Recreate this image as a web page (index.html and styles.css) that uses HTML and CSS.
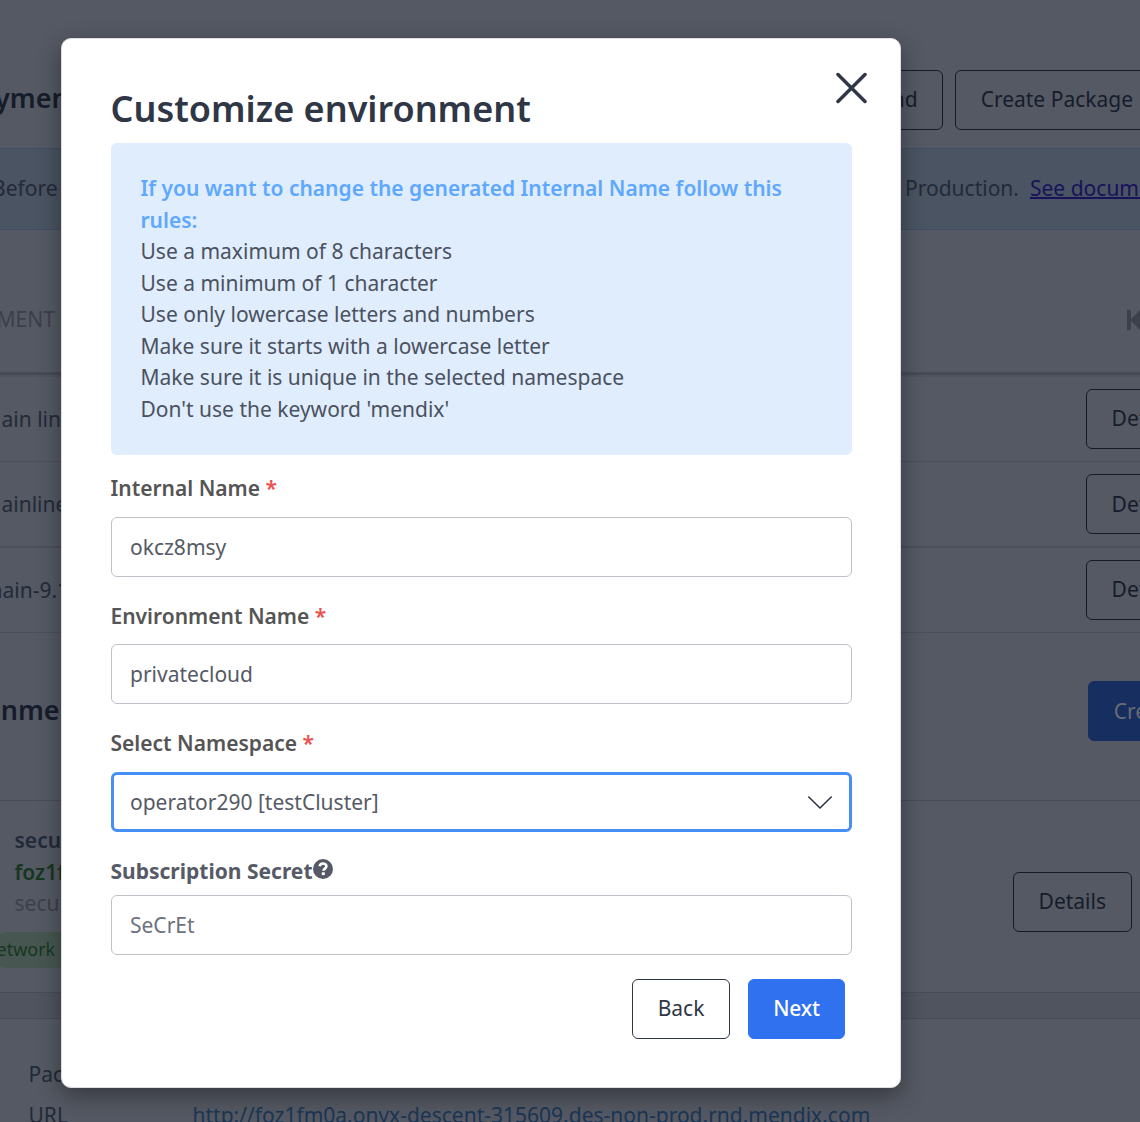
FILE: index.html
```html
<!DOCTYPE html>
<html lang="en">
<head>
<meta charset="utf-8">
<title>Customize environment</title>
<link rel="stylesheet" href="styles.css">
</head>
<body>
<main class="page">
  <header class="page-head">
    <h2 class="page-title">yment</h2>
    <div class="btn btn-dim btn-upload">nd</div>
    <div class="btn btn-dim">Create Package</div>
  </header>
  <div class="banner">
    <span class="banner-start">Before</span>
    <span class="banner-end">Production.</span>
    <a class="banner-link">See documentation</a>
  </div>
  <div class="table-head">
    <span class="column-name">MENT</span>
    <svg class="pager" width="20" height="20" viewBox="0 0 20 20"><path d="M0 0h4v20H0zM3 10 13 0v20z"/></svg>
  </div>
  <div class="row"><span class="row-name">ain line</span><div class="btn btn-dim">Details</div></div>
  <div class="row row-second"><span class="row-name">ainline</span><div class="btn btn-dim">Details</div></div>
  <div class="row"><span class="row-name row-name-cut">nain-9.1</span><div class="btn btn-dim">Details</div></div>
  <div class="env-head">
    <h2 class="env-title">onme</h2>
    <div class="btn btn-dim-primary">Create</div>
  </div>
  <section class="env-card">
    <div class="env-info">
      <div class="env-name">secu</div>
      <div class="env-id">foz1f</div>
      <div class="env-sub">secu</div>
      <div class="badge">etwork</div>
    </div>
    <div class="btn btn-dim env-details">Details</div>
  </section>
  <section class="env-meta">
    <div class="meta-row"><span class="meta-key">Pac</span></div>
    <div class="meta-row"><span class="meta-key">URL</span><a class="meta-link">http://foz1fm0a.onyx-descent-315609.des-non-prod.rnd.mendix.com</a></div>
  </section>
</main>

<div class="modal">
  <svg class="close" width="32" height="32" viewBox="0 0 32 32"><path d="M2 2.500l27 27M29 2.500l-27 27"/></svg>
  <h1 class="modal-title">Customize environment</h1>
  <div class="info">
    <strong class="info-title">If you want to change the generated Internal Name follow this rules:</strong>
    <div>Use a maximum of 8 characters</div>
    <div>Use a minimum of 1 character</div>
    <div>Use only lowercase letters and numbers</div>
    <div>Make sure it starts with a lowercase letter</div>
    <div>Make sure it is unique in the selected namespace</div>
    <div>Don't use the keyword 'mendix'</div>
  </div>
  <div class="field">
    <div class="label">Internal Name <span class="required">*</span></div>
    <div class="input">okcz8msy</div>
  </div>
  <div class="field field-environment">
    <div class="label">Environment Name <span class="required">*</span></div>
    <div class="input">privatecloud</div>
  </div>
  <div class="field">
    <div class="label">Select Namespace <span class="required">*</span></div>
    <div class="input input-focus">operator290 [testCluster]
      <svg class="chevron" width="26" height="14" viewBox="0 0 26 14"><path d="M1.800 1 13 12 24.200 1"/></svg>
    </div>
  </div>
  <div class="field field-secret">
    <div class="label label-secret">Subscription Secret<svg class="help" width="20" height="20" viewBox="0 0 20 20"><circle cx="10" cy="10" r="10"/><path d="M6.600 7.300C7 5.200 8.300 4.500 10 4.500c2 0 3.400 1.100 3.400 2.800 0 2.300-2.900 2.300-2.900 4.500"/><rect x="8.800" y="13.300" width="3" height="2.800"/></svg></div>
    <div class="input input-placeholder">SeCrEt</div>
  </div>
  <div class="actions">
    <div class="btn btn-back">Back</div>
    <div class="btn btn-next">Next</div>
  </div>
</div>
</body>
</html>
```
FILE: styles.css
```css
* { box-sizing: border-box; }

body {
  margin: 0;
  width: 1140px;
  height: 1122px;
  overflow: hidden;
  background: #555963;
  font: 21px/31.5px "Noto Sans", sans-serif;
  color: #232a39;
}

h1, h2 { margin: 0; font-weight: 600; }

.page { width: 1205px; height: 1122px; overflow: hidden; background: #50545e; }
.page-head, .env-card, .table-head, .row, .env-head, .env-meta { background: #555963; }

.btn {
  display: flex;
  flex: none;
  align-items: center;
  justify-content: center;
  height: 60px;
  padding: 0 25px;
  border: 1px solid #2f3646;
  border-radius: 6px;
  white-space: nowrap;
}
.btn-dim { border-color: #151b2b; color: #151c2b; }
.btn-dim-primary { width: 116px; padding-top: 1px; background: #162e60; border-color: #162e60; color: #686b72; }

.page-head { display: flex; gap: 12px; height: 148px; padding: 70px 46px 0 0; }
.page-title { flex: 1; height: 60px; margin-left: -5px; font-size: 27px; line-height: 56px; color: #151c2b; }
.btn-upload { width: 90px; padding-right: 24px; justify-content: flex-end; }

.banner {
  display: flex;
  align-items: center;
  height: 82px;
  background: #4a5462;
  border: solid #3f4e64;
  border-width: 1px 0;
}
.banner-start { flex: none; width: 913px; margin-left: -8px; }
.banner-end { flex: none; width: 125px; }
.banner-link { color: #17125a; text-decoration: underline; text-decoration-thickness: 2px; white-space: nowrap; }

.table-head {
  display: flex;
  align-items: center;
  height: 145px;
  padding-top: 37px;
  border-bottom: 3px solid #474b56;
}
.column-name { width: 1130px; margin-left: -3.5px; color: #3c404b; }
.pager { fill: #3c404b; }

.row {
  display: flex;
  align-items: center;
  justify-content: space-between;
  height: 85px;
  border-bottom: 1px solid #4c505a;
}
.table-head + .row { height: 87px; border-top: 2px solid #4f535d; }
.row-second { height: 86px; border-bottom-width: 2px; }
.row-second .btn { padding-top: 1px; }
.row-name { padding: 2px 0 0 1.5px; }
.row-name-cut { margin-left: -12px; }

.env-head {
  display: flex;
  align-items: center;
  justify-content: space-between;
  height: 168px;
  padding-right: 1px;
  padding-bottom: 11px;
  border-bottom: 1px solid #484c57;
}
.env-title { margin: -3px 0 0 -16px; font-size: 27px; color: #151c2b; }

.env-card { display: flex; justify-content: space-between; height: 192px; padding: 24px 73px 0 14.5px; border-bottom: 1px solid #484c57; }
.env-name { font-weight: 600; }
.env-id { font-weight: 600; color: #17361f; }
.env-sub { color: #3c404b; }
.badge {
  width: 84px;
  height: 36px;
  margin: 12px 0 0 -24px;
  padding-left: 6px;
  border-radius: 18px;
  background: #475650;
  color: #17361f;
  font-size: 18px;
  line-height: 34px;
}
.env-details { margin-top: 47px; }

.env-meta { height: 130px; margin-top: 25px; padding: 35px 0 0 28.5px; border-top: 1px solid #484c57; }
.meta-row { display: flex; height: 41px; line-height: 41px; }
.meta-key { width: 164px; }
.meta-link { color: #1b3655; text-decoration: none; }

.modal {
  position: absolute;
  left: 61px;
  top: 38px;
  width: 840px;
  height: 1050px;
  padding: 45px 48px 0 49px;
  border: 1px solid #dcdde0;
  background: #fff;
  border-radius: 10px;
  box-shadow: 0 8px 23px rgba(0, 0, 0, .38);
  color: #555a66;
}
.close {
  position: absolute;
  right: 32px;
  top: 33px;
  fill: none;
  stroke: #2f3646;
  stroke-width: 3.5;
  stroke-linecap: round;
}
.modal-title { height: 59px; margin-left: -.5px; font-size: 36px; line-height: 49px; color: #2f3646; white-space: nowrap; }

.info {
  height: 312px;
  padding: 30px 30px 30px 29.5px;
  border-radius: 6px;
  background: #e0edfd;
  color: #4a5160;
}
.info-title { display: block; font-weight: 600; color: #5fa8ff; }

.field { margin-top: 18px; height: 110px; }
.field-environment { height: 109px; }
.label { height: 44px; margin-left: -.5px; font-weight: 600; color: #555; }
.field-environment .label { height: 43px; }
.required { color: #e9534f; }
.input {
  display: flex;
  align-items: center;
  justify-content: space-between;
  height: 60px;
  padding: 1px 18px 0;
  border: 1px solid #bfc1c8;
  border-radius: 6px;
}
.input-focus { padding: 1px 16px 0; border: 3px solid #468ff7; }
.input-placeholder { color: #6c717e; }
.chevron { fill: none; stroke: #2f3646; stroke-width: 1.6; stroke-linecap: round; stroke-linejoin: round; }
.field-secret { height: 99px; }
.label-secret { display: flex; height: 39px; font-weight: 700; color: #555a66; }
.help { margin-top: 3px; fill: #555a66; }
.help path { fill: none; stroke: #fff; stroke-width: 2.600; }
.help rect { fill: #fff; }

.actions { display: flex; justify-content: flex-end; gap: 18px; padding: 24px 7px 0 0; color: #2f3646; }
.btn-back { width: 98px; }
.btn-next { width: 97px; background: #2f71ef; border-color: #2f71ef; color: #fff; font-weight: 500; letter-spacing: -.2px; }
```
